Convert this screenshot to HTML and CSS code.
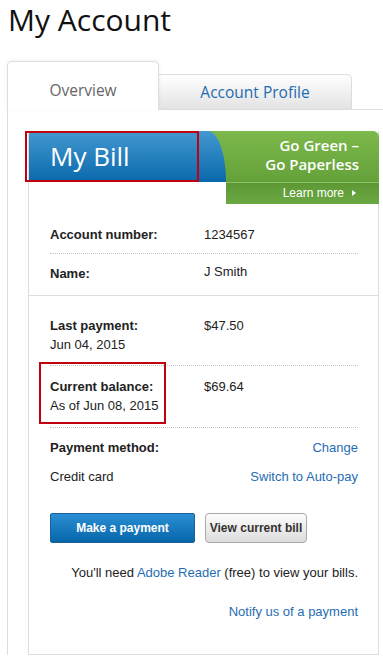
FILE: index.html
```html
<!DOCTYPE html>
<html lang="en">
<head>
<meta charset="utf-8">
<title>My Account</title>
<link rel="stylesheet" href="styles.css">
</head>
<body>
<h1 class="page-title">My Account</h1>
<div class="tabs">
  <div class="tab tab-active">Overview</div>
  <div class="tab tab-inactive">Account Profile</div>
  <div class="tabs-fill"></div>
</div>
<div class="panel">
  <div class="card">
    <div class="bill-head">
      <div class="bill-title">My Bill<span class="callout callout-title"></span></div>
      <div class="promo">
        <div class="promo-main"><div class="promo-line">Go Green –</div><div class="promo-line">Go Paperless</div></div>
        <a class="promo-link" href="#">Learn more <span class="arrow"></span></a>
      </div>
    </div>
    <div class="section section-top">
      <div class="row row-1 row-dotted"><div class="label">Account number:</div><div class="value">1234567</div></div>
      <div class="row row-2"><div class="label">Name:</div><div class="value value-up">J Smith</div></div>
    </div>
    <div class="section section-main">
      <div class="row row-3 row-dotted"><div><div class="label">Last payment:</div><div>Jun 04, 2015</div></div><div class="value">$47.50</div></div>
      <div class="row row-4 row-dotted"><div><div class="label">Current balance:</div><div>As of Jun 08, 2015</div></div><div class="value">$69.64</div><span class="callout callout-balance"></span></div>
      <div class="row row-5">
        <div class="label">Payment method:</div><a class="link right" href="#">Change</a>
        <div>Credit card</div><a class="link right" href="#">Switch to Auto-pay</a>
      </div>
      <div class="btn-row">
        <button class="btn btn-primary" type="button">Make a payment</button>
        <button class="btn btn-secondary" type="button">View current bill</button>
      </div>
      <p class="note">You'll need <a class="link" href="#">Adobe Reader</a> (free) to view your bills.</p>
      <p class="note"><a class="link" href="#">Notify us of a payment</a></p>
    </div>
  </div>
</div>
</body>
</html>
```
FILE: styles.css
```css
body {
  margin: 0;
  font-family: "Liberation Sans", Arial, sans-serif;
  color: #222;
  background: #fff;
}

.page-title {
  margin: 0;
  padding-left: 8px;
  font-family: "Open Sans", sans-serif;
  font-weight: 400;
  font-size: 30px;
  line-height: 40px;
  color: #111;
}

.tabs {
  display: flex;
  align-items: flex-end;
  margin-top: 21px;
  padding-left: 7px;
}

.tab {
  box-sizing: border-box;
  text-align: center;
  font-family: "Open Sans", sans-serif;
  font-size: 15.5px;
  line-height: 20px;
}

.tab-active {
  width: 152px;
  height: 49px;
  padding-top: 18px;
  border: 1px solid #ddd;
  border-bottom: none;
  border-radius: 5px 5px 0 0;
  background: #fff;
  color: #666;
  box-shadow: 0 -1px 4px rgba(0, 0, 0, 0.06);
  position: relative;
  z-index: 1;
}

.tab-inactive {
  width: 193px;
  height: 36px;
  padding-top: 7px;
  border: 1px solid #ddd;
  border-left: none;
  border-radius: 0 5px 0 0;
  background: linear-gradient(#ffffff, #e3e3e3);
  color: #1f6cb0;
}

.tabs-fill {
  flex: 1;
  border-bottom: 1px solid #ddd;
}

.panel {
  margin-left: 7px;
  border-left: 1px solid #ddd;
  padding: 21px 0 0 20px;
}

.card {
  width: 351px;
  box-sizing: border-box;
  border: 1px solid #ddd;
  border-top: none;
}

.bill-head {
  display: flex;
  align-items: flex-start;
  margin-right: -1px;
}

.bill-title {
  position: relative;
  z-index: 1;
  flex: 0 0 197px;
  height: 51px;
  box-sizing: border-box;
  padding-left: 21px;
  background: linear-gradient(#4399d0, #0968ac);
  border-radius: 4px 18px 0 0 / 4px 51px 0 0;
  color: #fff;
  font-family: "Open Sans", sans-serif;
  font-size: 26px;
  line-height: 50px;
}

.callout {
  position: absolute;
  box-sizing: border-box;
  border: 2px solid #c0000e;
}

.callout-title {
  left: -4px;
  top: 0;
  width: 174px;
  height: 51px;
}

.promo {
  flex: 1;
  margin-left: -30px;
}

.promo-main {
  display: flex;
  flex-direction: column;
  align-items: flex-end;
  height: 51px;
  box-sizing: border-box;
  padding: 6px 20px 0 0;
  background: linear-gradient(#7cb84b, #64a139);
  border-top-right-radius: 6px;
  color: #fff;
  font-family: "Open Sans", sans-serif;
  font-weight: 600;
  font-size: 15px;
}

.promo-line {
  height: 19px;
  line-height: 17px;
}

.promo-link {
  display: flex;
  align-items: center;
  justify-content: flex-end;
  gap: 8px;
  height: 22px;
  box-sizing: border-box;
  margin-left: 30px;
  padding: 0 23px 2px 0;
  border-top: 1px solid #8cc166;
  background: linear-gradient(#5d9835, #6ba843);
  color: #fff;
  font-size: 12px;
  text-decoration: none;
}

.arrow {
  width: 0;
  height: 0;
  border-left: 4px solid #fff;
  border-top: 3px solid transparent;
  border-bottom: 3px solid transparent;
}

.section {
  padding: 0 20px 0 21px;
}

.section-top {
  border-bottom: 1px solid #ddd;
}

.section-main {
  padding-bottom: 33px;
}

.row {
  display: grid;
  grid-template-columns: 154px 1fr;
  font-size: 13px;
  line-height: 19px;
}

.row-dotted {
  border-bottom: 1px dotted #c4c4c4;
}

.row-1 { padding: 21px 0 9px; }
.row-2 { padding: 10px 0 12px; }
.row-3 { padding: 20px 0 11px; }
.row-4 { padding: 11px 0 12px; position: relative; }
.row-5 { padding: 10px 0 0; row-gap: 10px; }

.value-up {
  margin-top: -2px;
}

.label {
  font-weight: bold;
}

.callout-balance {
  left: -11px;
  top: -4px;
  width: 127px;
  height: 62px;
}

.link {
  color: #1f6db3;
  text-decoration: none;
}

.right {
  justify-self: end;
}

.btn-row {
  display: flex;
  gap: 10px;
  margin-top: 27px;
}

.btn {
  height: 30px;
  box-sizing: border-box;
  padding: 0;
  font-family: "Liberation Sans", Arial, sans-serif;
  font-weight: bold;
  font-size: 12px;
}

.btn-primary {
  width: 145px;
  color: #fff;
  background: linear-gradient(#2a8fd4, #0766aa);
  border: 1px solid #1d5f98;
  border-radius: 2px;
}

.btn-secondary {
  width: 102px;
  color: #333;
  background: linear-gradient(#fdfdfd, #dcdcdc);
  border: 1px solid #a9a9a9;
  border-radius: 4px;
}

.note {
  margin: 20px 0 0;
  text-align: right;
  font-size: 13px;
  line-height: 19px;
}
```
